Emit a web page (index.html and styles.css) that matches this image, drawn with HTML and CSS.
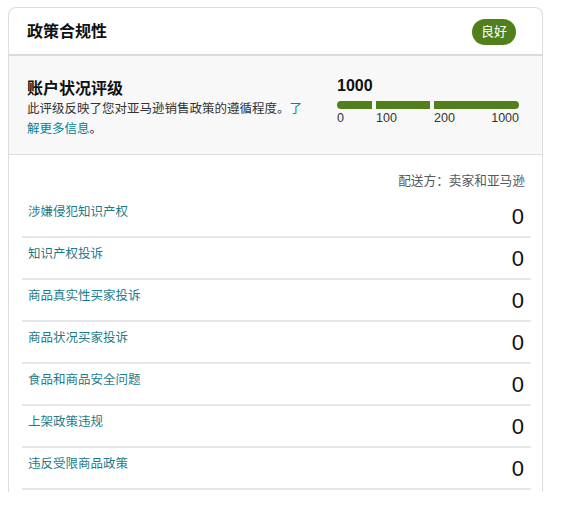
FILE: index.html
```html
<!DOCTYPE html>
<html lang="zh-CN">
<head>
<meta charset="utf-8">
<title>政策合规性</title>
<link rel="stylesheet" href="styles.css">
</head>
<body>
<div class="card">
  <div class="card-header">
    <h2 class="title">政策合规性</h2>
    <span class="badge">良好</span>
  </div>
  <div class="rating">
    <div class="rating-info">
      <h3 class="rating-title">账户状况评级</h3>
      <p class="rating-desc">此评级反映了您对亚马逊销售政策的遵循程度。<a class="link" href="#">了解更多信息</a>。</p>
    </div>
    <div class="score">
      <div class="score-value">1000</div>
      <div class="bar">
        <span class="seg seg1"></span>
        <span class="seg seg2"></span>
        <span class="seg seg3"></span>
      </div>
      <div class="scale">
        <span class="tick t1">0</span>
        <span class="tick t2">100</span>
        <span class="tick t3">200</span>
        <span class="tick t4">1000</span>
      </div>
    </div>
  </div>
  <div class="details">
    <div class="fulfilled">配送方：卖家和亚马逊</div>
    <div class="row"><a class="row-label" href="#">涉嫌侵犯知识产权</a><span class="row-value">0</span></div>
    <div class="row"><a class="row-label" href="#">知识产权投诉</a><span class="row-value">0</span></div>
    <div class="row"><a class="row-label" href="#">商品真实性买家投诉</a><span class="row-value">0</span></div>
    <div class="row"><a class="row-label" href="#">商品状况买家投诉</a><span class="row-value">0</span></div>
    <div class="row"><a class="row-label" href="#">食品和商品安全问题</a><span class="row-value">0</span></div>
    <div class="row"><a class="row-label" href="#">上架政策违规</a><span class="row-value">0</span></div>
    <div class="row"><a class="row-label" href="#">违反受限商品政策</a><span class="row-value">0</span></div>
  </div>
</div>
</body>
</html>
```
FILE: styles.css
```css
* { box-sizing: border-box; }
html, body { margin: 0; padding: 0; background: #fff; }
body {
  font-family: "Liberation Sans", "Noto Sans CJK SC", sans-serif;
  color: #0f1111;
  padding: 7px 18px 0 8px;
}
.card {
  width: 535px;
  border: 1px solid #dddddd;
  border-bottom: none;
  border-radius: 8px 8px 0 0;
  background: #fff;
}
.card-header {
  height: 48px;
  display: flex;
  align-items: center;
  justify-content: space-between;
  padding: 2px 26px 0 18px;
  border-bottom: 2px solid #d9dcdc;
}
.title {
  margin: 0;
  font-size: 16px;
  font-weight: 700;
  line-height: 20px;
}
.badge {
  width: 44px;
  height: 26px;
  border-radius: 13px;
  background: #507f1c;
  color: #fff;
  font-size: 13px;
  line-height: 26px;
  text-align: center;
}
.rating {
  background: #f8f8f8;
  border-bottom: 1px solid #dddddd;
  height: 99px;
  display: flex;
  padding: 23px 22px 0 18px;
}
.rating-info { width: 310px; }
.rating-title {
  margin: 0;
  font-size: 16px;
  font-weight: 700;
  line-height: 20px;
}
.rating-desc {
  margin: 0;
  width: 282px;
  font-size: 12.5px;
  line-height: 20px;
  color: #333;
}
.link { color: #008296; text-decoration: none; }
.score { width: 182px; }
.score-value {
  font-size: 16px;
  font-weight: 700;
  line-height: 18px;
  margin-top: -2px;
}
.bar {
  display: flex;
  gap: 4px;
  margin-top: 6px;
  height: 8px;
}
.seg { background: #507f1c; height: 8px; }
.seg1 { width: 35px; border-radius: 4px 0 0 4px; }
.seg2 { width: 54px; }
.seg3 { width: 85px; border-radius: 0 4px 4px 0; }
.scale {
  display: flex;
  font-size: 12.5px;
  line-height: 14px;
  color: #333;
  margin-top: 2px;
}
.tick.t1 { width: 39px; }
.tick.t2 { width: 58px; }
.tick.t3 { flex: 1; }
.tick.t4 { text-align: right; }
.details {
  padding: 18px 11px 2px 13px;
}
.fulfilled {
  text-align: right;
  font-size: 12.7px;
  line-height: 16px;
  color: #565959;
  padding-right: 6px;
  margin-bottom: 7px;
}
.row {
  height: 42px;
  display: flex;
  justify-content: space-between;
  align-items: flex-start;
  border-bottom: 2px solid #e7e7e7;
  padding: 0 7px 0 6px;
}
.row-label {
  color: #1d7b8a;
  text-decoration: none;
  font-size: 12.5px;
  line-height: 18px;
  margin-top: 7px;
}
.row-value {
  font-size: 22px;
  line-height: 24px;
  margin-top: 9px;
  color: #0f1111;
}
```
